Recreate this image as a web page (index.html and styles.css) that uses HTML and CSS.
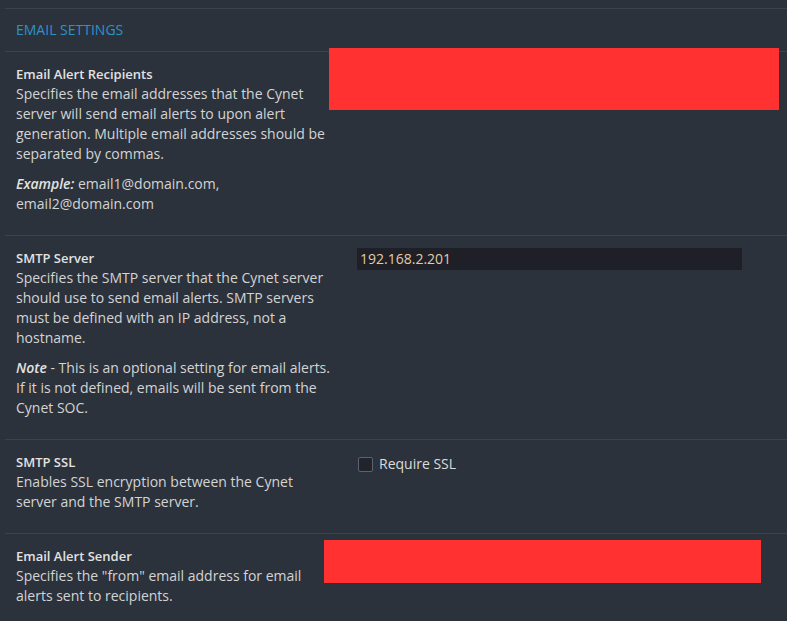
FILE: index.html
```html
<!DOCTYPE html>
<html lang="en">
<head>
<meta charset="utf-8">
<title>Email Settings</title>
<link rel="stylesheet" href="styles.css">
</head>
<body>
<div class="panel">
  <div class="section-head">EMAIL SETTINGS</div>

  <div class="row">
    <div class="desc">
      <p><span class="title">Email Alert Recipients</span><br>Specifies the email addresses that the Cynet server will send email alerts to upon alert generation. Multiple email addresses should be separated by commas.</p>
      <p><em>Example:</em> email1@domain.com, email2@domain.com</p>
    </div>
    <div class="control"></div>
    <div class="redact redact-1"></div>
  </div>

  <div class="row">
    <div class="desc">
      <p><span class="title">SMTP Server</span><br>Specifies the SMTP server that the Cynet server should use to send email alerts. SMTP servers must be defined with an IP address, not a hostname.</p>
      <p><em>Note</em> - This is an optional setting for email alerts. If it is not defined, emails will be sent from the Cynet SOC.</p>
    </div>
    <div class="control">
      <div class="text-input">192.168.2.201</div>
    </div>
  </div>

  <div class="row">
    <div class="desc">
      <p><span class="title">SMTP SSL</span><br>Enables SSL encryption between the Cynet server and the SMTP server.</p>
    </div>
    <div class="control">
      <label class="check"><span class="box"></span><span class="check-label">Require SSL</span></label>
    </div>
  </div>

  <div class="row">
    <div class="desc">
      <p><span class="title">Email Alert Sender</span><br>Specifies the "from" email address for email alerts sent to recipients.</p>
    </div>
    <div class="control"></div>
    <div class="redact redact-2"></div>
  </div>
</div>
</body>
</html>
```

FILE: styles.css
```css
html, body {
  margin: 0;
  padding: 0;
  background: #2b323c;
  height: 100%;
  overflow: hidden;
}
body {
  font-family: "Open Sans", "Liberation Sans", sans-serif;
  font-size: 14px;
  line-height: 20px;
  color: #d4d4d4;
}
.panel {
  margin: 8px 0 0 5px;
  border-top: 1px solid #3c4350;
}
.section-head {
  height: 42px;
  line-height: 42px;
  padding-left: 11px;
  color: #2b93c8;
  font-size: 14px;
  border-bottom: 1px solid #3c4350;
}
.row {
  position: relative;
  display: flex;
  padding: 12px 0 11px 11px;
  border-bottom: 1px solid #3c4350;
}
.row:last-child { border-bottom: none; }
.desc {
  width: 318px;
  flex: none;
}
.desc p {
  margin: 0 0 10px 0;
}
.title {
  font-size: 13px;
  font-weight: 600;
  color: #e2e2e2;
}
em {
  font-weight: 600;
  font-style: italic;
  color: #e2e2e2;
}
.control {
  margin-left: 23px;
  flex: 1;
}
.text-input {
  width: 382px;
  height: 22px;
  line-height: 22px;
  padding-left: 3px;
  background: #1e1f27;
  color: #e3cba3;
  font-size: 14px;
}
.check {
  display: flex;
  align-items: center;
  margin-top: 2px;
}
.box {
  width: 13px;
  height: 13px;
  border: 1px solid #5c6270;
  border-radius: 2px;
  background: #22242c;
  margin-left: 1px;
}
.check-label {
  margin-left: 6px;
  font-size: 14px;
  color: #dcdcdc;
}
.redact {
  position: absolute;
  background: #ff3131;
}
.redact-1 {
  left: 324px;
  top: -4px;
  width: 450px;
  height: 62px;
}
.redact-2 {
  left: 319px;
  top: 6px;
  width: 437px;
  height: 43px;
}
```
